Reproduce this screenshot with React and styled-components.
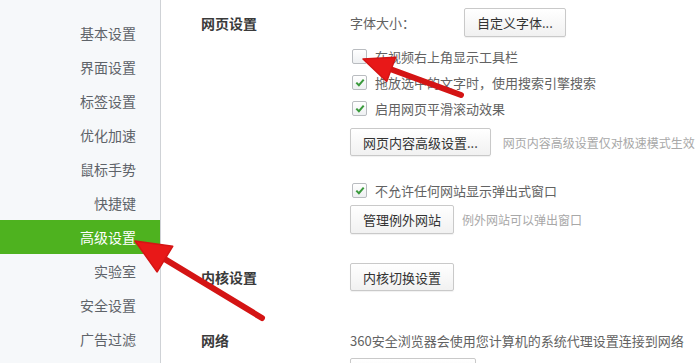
import React from "react";
import styled, { createGlobalStyle } from "styled-components";

const GlobalStyle = createGlobalStyle`
  html, body {
    margin: 0;
    padding: 0;
    background: #ffffff;
  }
  body {
    font-family: "Noto Sans CJK SC", "Liberation Sans", sans-serif;
  }
`;

const Page = styled.div`
  position: relative;
  width: 697px;
  height: 363px;
  overflow: hidden;
  display: flex;
  background: #fff;
`;

const Sidebar = styled.ul`
  list-style: none;
  margin: 0;
  padding: 16px 0 0;
  width: 160px;
  flex-shrink: 0;
  background: #f6f8fa;
  border-right: 1px solid #cfd2d6;
`;

const NavItem = styled.li`
  height: 34px;
  line-height: 34px;
  padding-right: 24px;
  text-align: right;
  font-size: 14px;
  color: ${(p) => (p.active ? "#ffffff" : "#5e6369")};
  background: ${(p) => (p.active ? "#4eb21f" : "transparent")};
`;

const Main = styled.div`
  flex: 1;
  padding-top: 8px;
`;

const Section = styled.div`
  display: grid;
  grid-template-columns: 189px 1fr;
  margin-top: ${(p) => p.gap || 0}px;
`;

const SectionTitle = styled.div`
  padding-left: 40px;
  height: ${(p) => p.h || 29}px;
  display: flex;
  align-items: center;
  font-size: 14px;
  font-weight: bold;
  color: #3a3a3a;
`;

const Body = styled.div`
  display: flex;
  flex-direction: column;
`;

const Row = styled.div`
  display: flex;
  align-items: center;
  height: ${(p) => p.h || 26}px;
  margin-top: ${(p) => p.mt || 0}px;
  font-size: 13px;
  color: #626262;
  white-space: nowrap;
`;

const Label = styled.span`
  width: 114px;
`;

const Button = styled.button`
  height: ${(p) => p.h || 29}px;
  padding: 0 12px;
  border: 1px solid #c9c9c9;
  border-radius: 2px;
  background: linear-gradient(#ffffff, #f1f1f1);
  box-shadow: 0 1px 1px rgba(0, 0, 0, 0.06);
  font-family: inherit;
  font-size: 13px;
  color: #333;
  cursor: pointer;
`;

const Hint = styled.span`
  margin-left: ${(p) => p.ml || 12}px;
  font-size: 12px;
  color: #a8a8a8;
`;

const Box = styled.span`
  width: 13px;
  height: 13px;
  margin: 0 8px 0 2px;
  border: 1px solid #b9bcc0;
  border-radius: 2px;
  background: linear-gradient(#ffffff, #eef0f2);
  display: flex;
  align-items: center;
  justify-content: center;
`;

const Overlay = styled.svg`
  position: absolute;
  left: 0;
  top: 0;
  pointer-events: none;
`;

const Check = ({ checked, children }) => (
  <>
    <Box>
      {checked && (
        <svg width="10" height="9" viewBox="0 0 10 9">
          <path d="M1.3 4.6 L3.9 7.2 L8.7 1.6" fill="none" stroke="#3a9a3c" strokeWidth="2" />
        </svg>
      )}
    </Box>
    <span>{children}</span>
  </>
);

const navItems = ["基本设置", "界面设置", "标签设置", "优化加速", "鼠标手势", "快捷键", "高级设置", "实验室", "安全设置", "广告过滤"];

const Arrow = ({ tip, tail, len, half }) => {
  const dx = tip[0] - tail[0];
  const dy = tip[1] - tail[1];
  const d = Math.hypot(dx, dy);
  const ux = dx / d;
  const uy = dy / d;
  const bx = tip[0] - ux * len;
  const by = tip[1] - uy * len;
  const nx = -uy;
  const ny = ux;
  const pts = `${tip[0]},${tip[1]} ${bx + nx * half},${by + ny * half} ${bx - nx * half},${by - ny * half}`;
  return (
    <g>
      <line x1={tail[0]} y1={tail[1]} x2={bx + ux * 4} y2={by + uy * 4} stroke="#d41414" strokeWidth="6" strokeLinecap="round" />
      <polygon points={pts} fill="#e81818" stroke="#d41414" strokeWidth="1.5" strokeLinejoin="round" />
    </g>
  );
};

const App = () => (
  <Page>
    <GlobalStyle />
    <Sidebar>
      {navItems.map((n) => (
        <NavItem key={n} active={n === "高级设置"}>
          {n}
        </NavItem>
      ))}
    </Sidebar>
    <Main>
      <Section>
        <SectionTitle>网页设置</SectionTitle>
        <Body>
          <Row h={29}>
            <Label>字体大小：</Label>
            <Button>自定义字体...</Button>
          </Row>
          <Row mt={6}>
            <Check>在视频右上角显示工具栏</Check>
          </Row>
          <Row>
            <Check checked>拖放选中的文字时，使用搜索引擎搜索</Check>
          </Row>
          <Row>
            <Check checked>启用网页平滑滚动效果</Check>
          </Row>
          <Row h={28} mt={7}>
            <Button h={28}>网页内容高级设置...</Button>
            <Hint>网页内容高级设置仅对极速模式生效</Hint>
          </Row>
          <Row mt={21}>
            <Check checked>不允许任何网站显示弹出式窗口</Check>
          </Row>
          <Row h={29} mt={2}>
            <Button>管理例外网站</Button>
            <Hint ml={8}>例外网站可以弹出窗口</Hint>
          </Row>
        </Body>
      </Section>
      <Section gap={29}>
        <SectionTitle h={28}>内核设置</SectionTitle>
        <Body>
          <Row h={28}>
            <Button h={28}>内核切换设置</Button>
          </Row>
        </Body>
      </Section>
      <Section gap={36}>
        <SectionTitle h={26}>网络</SectionTitle>
        <Body>
          <Row>360安全浏览器会使用您计算机的系统代理设置连接到网络</Row>
          <Row h={29} mt={5}>
            <Button style={{ width: 126 }} />
          </Row>
        </Body>
      </Section>
    </Main>
    <Overlay width="697" height="363">
      <Arrow tip={[363, 59]} tail={[461, 95]} len={30} half={13} />
      <Arrow tip={[135, 241]} tail={[262, 318]} len={35} half={15} />
    </Overlay>
  </Page>
);

export default App;
